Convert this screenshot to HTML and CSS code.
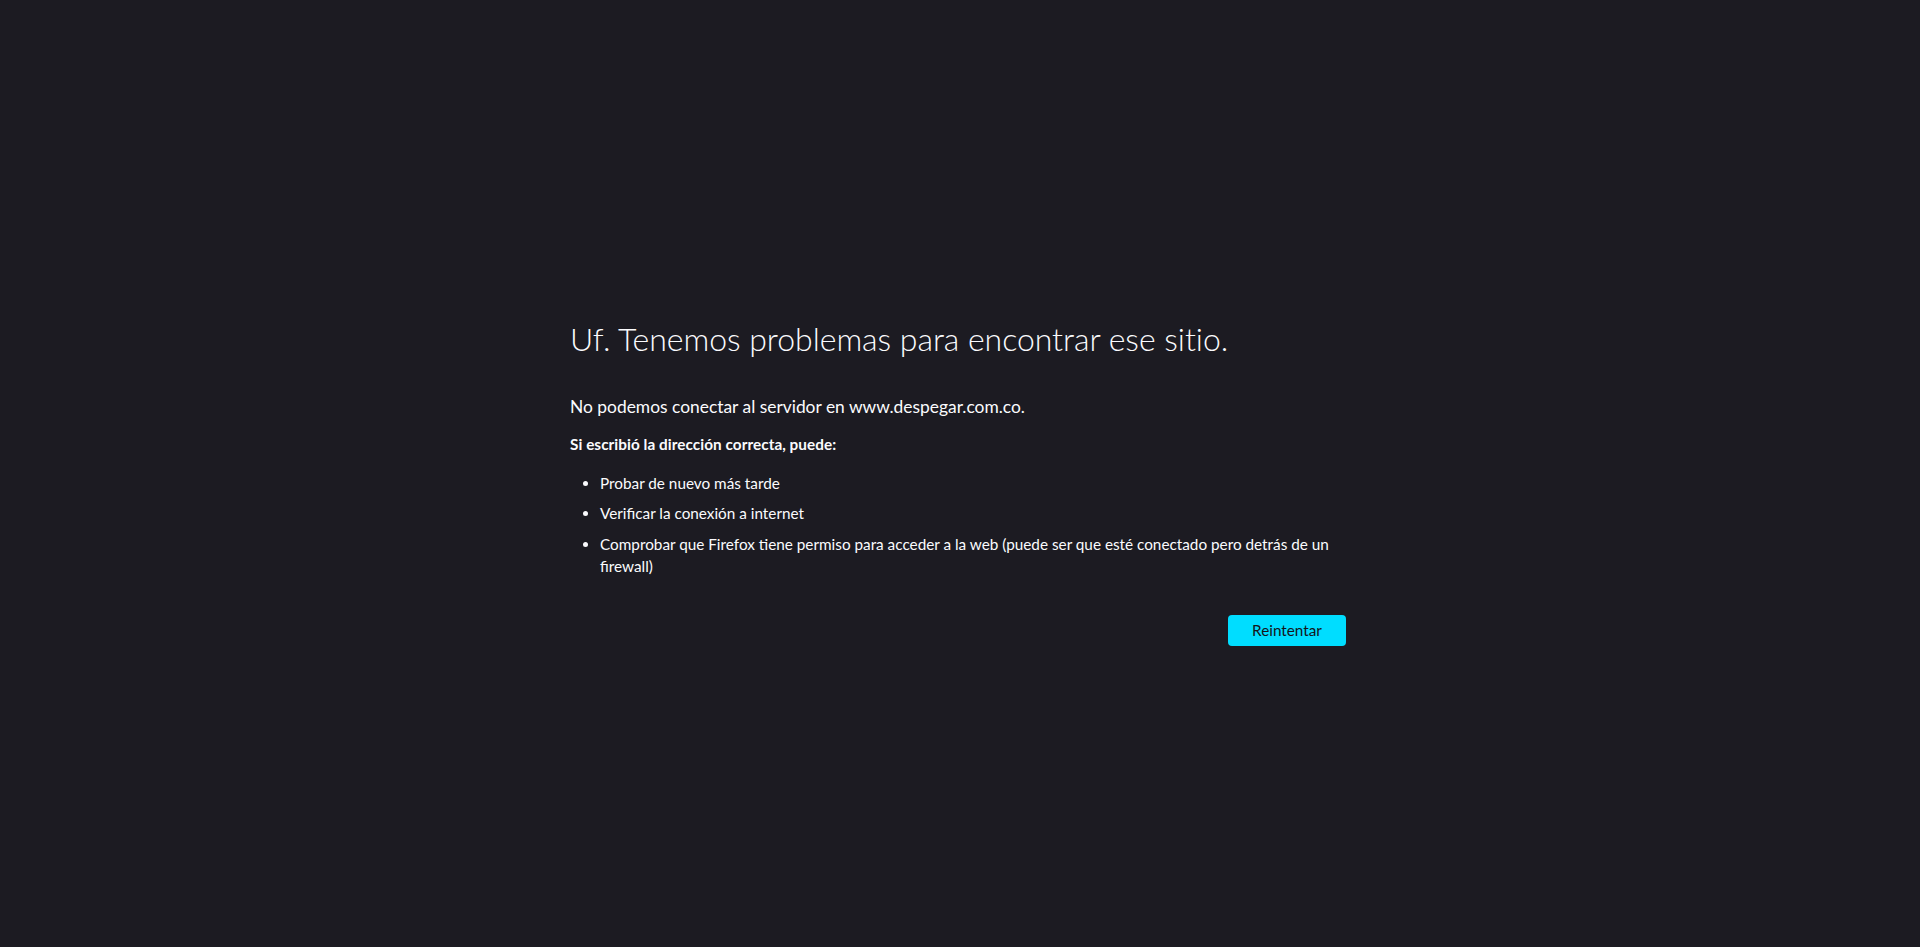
FILE: index.html
```html
<!DOCTYPE html>
<html lang="es">
<head>
<meta charset="utf-8">
<title>Problema al cargar la página</title>
<link rel="stylesheet" href="styles.css">
</head>
<body>
<main class="container">
  <h1 class="title">Uf. Tenemos problemas para encontrar ese sitio.</h1>
  <p class="short-desc">No podemos conectar al servidor en www.despegar.com.co.</p>
  <p class="long-intro">Si escribió la dirección correcta, puede:</p>
  <ul class="tips">
    <li>Probar de nuevo más tarde</li>
    <li>Verificar la conexión a internet</li>
    <li>Comprobar que Firefox tiene permiso para acceder a la web (puede ser que esté conectado pero detrás de un firewall)</li>
  </ul>
  <div class="actions">
    <button class="retry" type="button">Reintentar</button>
  </div>
</main>
</body>
</html>
```
FILE: styles.css
```css
html, body {
  margin: 0;
  padding: 0;
}
body {
  background: #1c1b22;
  color: #fbfbfe;
  font-family: Lato, "Open Sans", sans-serif;
  font-size: 15.3px;
  line-height: 22.5px;
  min-height: 100vh;
}
.container {
  width: 780px;
  margin: 0 auto;
  padding-top: 319px;
}
.title {
  margin: 0;
  font-size: 32px;
  font-weight: 300;
  line-height: 40px;
  letter-spacing: -0.03px;
}
.short-desc {
  margin: 35px 0 0;
  font-size: 17.4px;
  line-height: 25px;
}
.long-intro {
  margin: 14px 0 0;
  font-weight: 700;
  letter-spacing: 0.06px;
}
.tips {
  margin: 16px 0 0;
  padding-left: 30px;
}
.tips li {
  margin: 8px 0;
}
.tips li:first-child { margin-top: 0; }
.actions {
  display: flex;
  justify-content: flex-end;
  padding-right: 4px;
  margin-top: 37px;
}
.retry {
  width: 118px;
  height: 31px;
  border: 0;
  border-radius: 4px;
  background: #00ddff;
  color: #15141a;
  font: inherit;
  font-size: 15.3px;
  padding: 0;
}
```
